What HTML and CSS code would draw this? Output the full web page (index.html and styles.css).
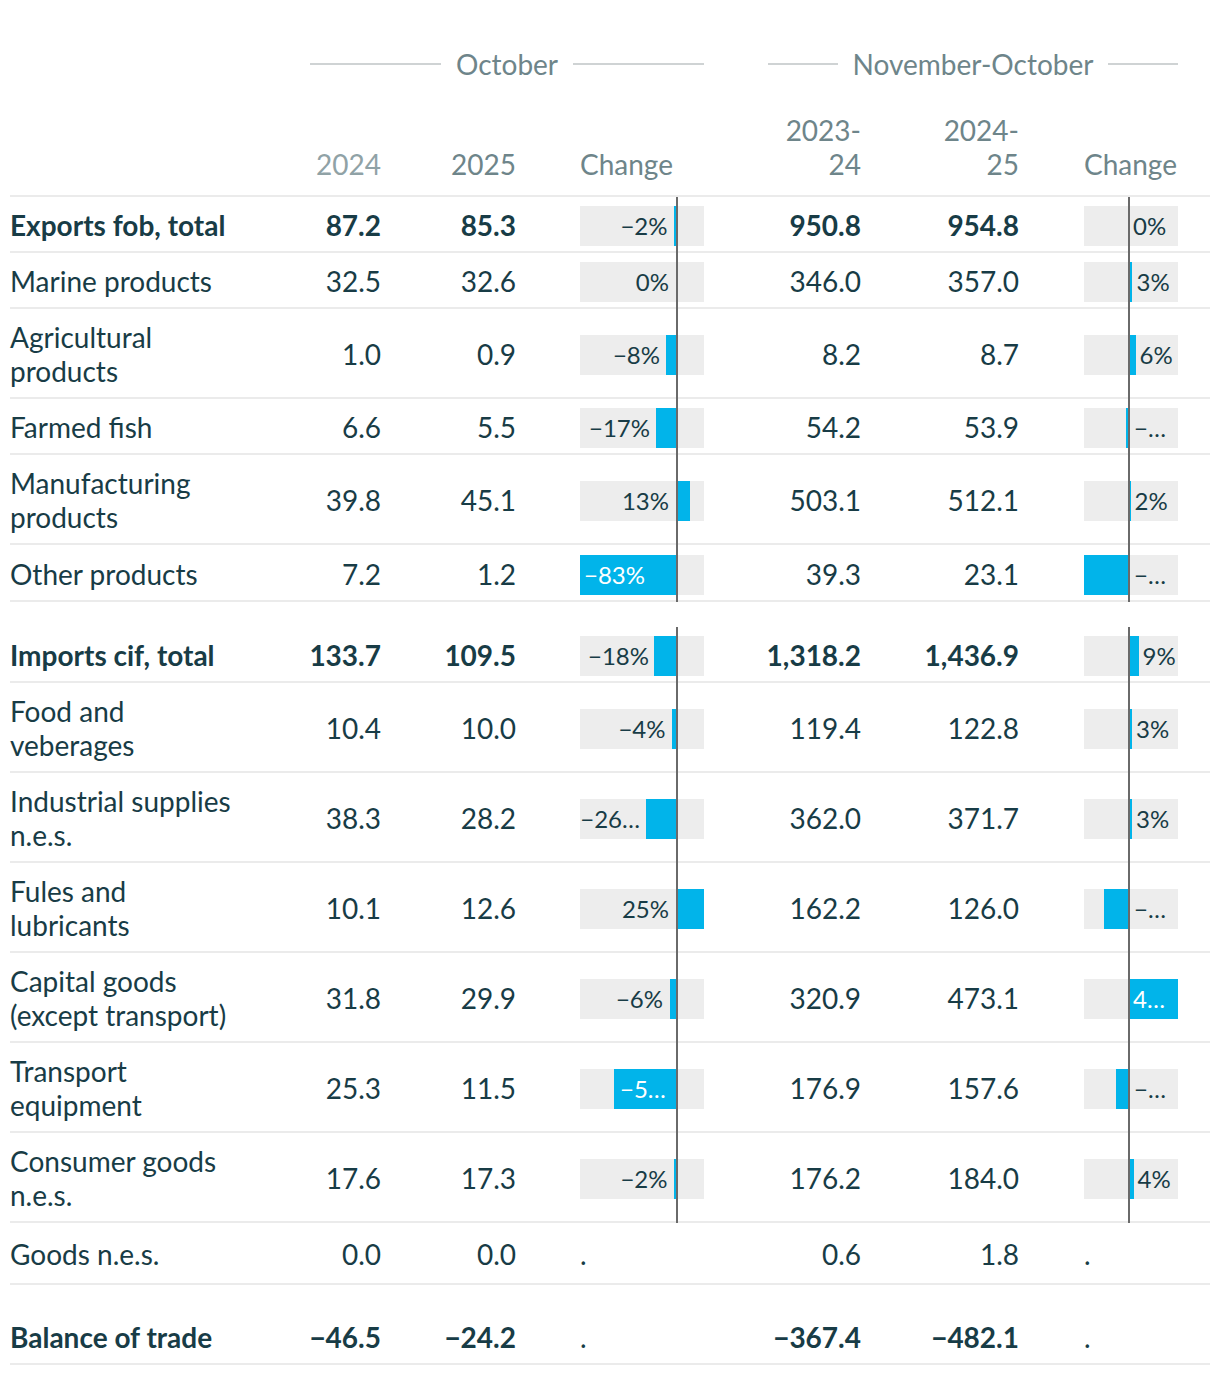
FILE: index.html
```html
<!DOCTYPE html>
<html lang="en">
<head>
<meta charset="utf-8">
<title>Trade table</title>
<link rel="stylesheet" href="styles.css">
</head>
<body>
<div class="table">
  <div class="grow group-row">
    <div class="group g-oct"><span class="rule"></span><span class="gtext">October</span><span class="rule"></span></div>
    <div class="group g-nov"><span class="rule"></span><span class="gtext">November-October</span><span class="rule"></span></div>
  </div>

  <div class="grow head-row">
    <div class="hc lab"></div>
    <div class="hc num light">2024</div>
    <div class="hc num">2025</div>
    <div class="hc chg">Change</div>
    <div class="hc num"><span class="wrap2">2023-<wbr>24</span></div>
    <div class="hc num"><span class="wrap2">2024-<wbr>25</span></div>
    <div class="hc chg2">Change</div>
    <div class="hc"></div>
  </div>

  <!-- Exports -->
  <div class="grow row bold">
    <div class="lab">Exports fob, total</div>
    <div class="num">87.2</div>
    <div class="num">85.3</div>
    <div class="bar b1"><div class="track"><i class="fill" style="left:94px;width:3px"></i><span class="bl" style="right:36.5px">−2%</span></div><i class="zero"></i></div>
    <div class="num">950.8</div>
    <div class="num">954.8</div>
    <div class="bar b2"><div class="track"><i class="fill" style="left:45px;width:0.5px"></i><span class="bl" style="left:49px">0%</span></div><i class="zero"></i></div>
    <div></div>
  </div>

  <div class="grow row">
    <div class="lab">Marine products</div>
    <div class="num">32.5</div>
    <div class="num">32.6</div>
    <div class="bar b1"><div class="track"><i class="fill" style="left:97px;width:0.4px"></i><span class="bl" style="right:35px">0%</span></div><i class="zero"></i></div>
    <div class="num">346.0</div>
    <div class="num">357.0</div>
    <div class="bar b2"><div class="track"><i class="fill" style="left:45px;width:3.4px"></i><span class="bl" style="left:52.5px">3%</span></div><i class="zero"></i></div>
    <div></div>
  </div>

  <div class="grow row">
    <div class="lab">Agricultural products</div>
    <div class="num">1.0</div>
    <div class="num">0.9</div>
    <div class="bar b1"><div class="track"><i class="fill" style="left:86px;width:11px"></i><span class="bl" style="right:44px">−8%</span></div><i class="zero"></i></div>
    <div class="num">8.2</div>
    <div class="num">8.7</div>
    <div class="bar b2"><div class="track"><i class="fill" style="left:45px;width:6.5px"></i><span class="bl" style="left:55.5px">6%</span></div><i class="zero"></i></div>
    <div></div>
  </div>

  <div class="grow row">
    <div class="lab">Farmed fish</div>
    <div class="num">6.6</div>
    <div class="num">5.5</div>
    <div class="bar b1"><div class="track"><i class="fill" style="left:76px;width:21px"></i><span class="bl" style="right:54px">−17%</span></div><i class="zero"></i></div>
    <div class="num">54.2</div>
    <div class="num">53.9</div>
    <div class="bar b2"><div class="track"><i class="fill" style="left:42px;width:3px"></i><span class="bl" style="left:50px">−…</span></div><i class="zero"></i></div>
    <div></div>
  </div>

  <div class="grow row">
    <div class="lab">Manufacturing products</div>
    <div class="num">39.8</div>
    <div class="num">45.1</div>
    <div class="bar b1"><div class="track"><i class="fill" style="left:97px;width:13px"></i><span class="bl" style="right:35px">13%</span></div><i class="zero"></i></div>
    <div class="num">503.1</div>
    <div class="num">512.1</div>
    <div class="bar b2"><div class="track"><i class="fill" style="left:45px;width:1.9px"></i><span class="bl" style="left:50.5px">2%</span></div><i class="zero"></i></div>
    <div></div>
  </div>

  <div class="grow row r-other">
    <div class="lab">Other products</div>
    <div class="num">7.2</div>
    <div class="num">1.2</div>
    <div class="bar b1"><div class="track"><i class="fill" style="left:0;width:97px"></i><span class="bl in" style="left:4px">−83%</span></div><i class="zero"></i></div>
    <div class="num">39.3</div>
    <div class="num">23.1</div>
    <div class="bar b2"><div class="track"><i class="fill" style="left:0;width:45px"></i><span class="bl" style="left:50px">−…</span></div><i class="zero"></i></div>
    <div></div>
  </div>

  <div class="spacer s1"></div>

  <!-- Imports -->
  <div class="grow row bold">
    <div class="lab">Imports cif, total</div>
    <div class="num">133.7</div>
    <div class="num">109.5</div>
    <div class="bar b1"><div class="track"><i class="fill" style="left:74px;width:23px"></i><span class="bl" style="right:55px">−18%</span></div><i class="zero"></i></div>
    <div class="num">1,318.2</div>
    <div class="num">1,436.9</div>
    <div class="bar b2"><div class="track"><i class="fill" style="left:45px;width:9.5px"></i><span class="bl" style="left:58.5px">9%</span></div><i class="zero"></i></div>
    <div></div>
  </div>

  <div class="grow row">
    <div class="lab">Food and veberages</div>
    <div class="num">10.4</div>
    <div class="num">10.0</div>
    <div class="bar b1"><div class="track"><i class="fill" style="left:92px;width:5px"></i><span class="bl" style="right:38.5px">−4%</span></div><i class="zero"></i></div>
    <div class="num">119.4</div>
    <div class="num">122.8</div>
    <div class="bar b2"><div class="track"><i class="fill" style="left:45px;width:3px"></i><span class="bl" style="left:52px">3%</span></div><i class="zero"></i></div>
    <div></div>
  </div>

  <div class="grow row">
    <div class="lab">Industrial supplies n.e.s.</div>
    <div class="num">38.3</div>
    <div class="num">28.2</div>
    <div class="bar b1"><div class="track"><i class="fill" style="left:66px;width:31px"></i><span class="bl" style="right:64px">−26…</span></div><i class="zero"></i></div>
    <div class="num">362.0</div>
    <div class="num">371.7</div>
    <div class="bar b2"><div class="track"><i class="fill" style="left:45px;width:2.8px"></i><span class="bl" style="left:52px">3%</span></div><i class="zero"></i></div>
    <div></div>
  </div>

  <div class="grow row">
    <div class="lab">Fules and lubricants</div>
    <div class="num">10.1</div>
    <div class="num">12.6</div>
    <div class="bar b1"><div class="track"><i class="fill" style="left:97px;width:27px"></i><span class="bl" style="right:35px">25%</span></div><i class="zero"></i></div>
    <div class="num">162.2</div>
    <div class="num">126.0</div>
    <div class="bar b2"><div class="track"><i class="fill" style="left:20px;width:25px"></i><span class="bl" style="left:50px">−…</span></div><i class="zero"></i></div>
    <div></div>
  </div>

  <div class="grow row">
    <div class="lab">Capital goods (except transport)</div>
    <div class="num">31.8</div>
    <div class="num">29.9</div>
    <div class="bar b1"><div class="track"><i class="fill" style="left:90px;width:7px"></i><span class="bl" style="right:41px">−6%</span></div><i class="zero"></i></div>
    <div class="num">320.9</div>
    <div class="num">473.1</div>
    <div class="bar b2"><div class="track"><i class="fill" style="left:45px;width:49px"></i><span class="bl in" style="left:49px">4…</span></div><i class="zero"></i></div>
    <div></div>
  </div>

  <div class="grow row">
    <div class="lab">Transport equipment</div>
    <div class="num">25.3</div>
    <div class="num">11.5</div>
    <div class="bar b1"><div class="track"><i class="fill" style="left:34px;width:63px"></i><span class="bl in" style="left:40px">−5…</span></div><i class="zero"></i></div>
    <div class="num">176.9</div>
    <div class="num">157.6</div>
    <div class="bar b2"><div class="track"><i class="fill" style="left:32px;width:13px"></i><span class="bl" style="left:50px">−…</span></div><i class="zero"></i></div>
    <div></div>
  </div>

  <div class="grow row">
    <div class="lab">Consumer goods n.e.s.</div>
    <div class="num">17.6</div>
    <div class="num">17.3</div>
    <div class="bar b1"><div class="track"><i class="fill" style="left:94px;width:3px"></i><span class="bl" style="right:36.5px">−2%</span></div><i class="zero"></i></div>
    <div class="num">176.2</div>
    <div class="num">184.0</div>
    <div class="bar b2"><div class="track"><i class="fill" style="left:45px;width:4.7px"></i><span class="bl" style="left:53.5px">4%</span></div><i class="zero"></i></div>
    <div></div>
  </div>

  <div class="grow row tall">
    <div class="lab">Goods n.e.s.</div>
    <div class="num">0.0</div>
    <div class="num">0.0</div>
    <div class="dot b1">.</div>
    <div class="num">0.6</div>
    <div class="num">1.8</div>
    <div class="dot b2">.</div>
    <div></div>
  </div>

  <div class="spacer s2"></div>

  <div class="grow row bold">
    <div class="lab">Balance of trade</div>
    <div class="num">−46.5</div>
    <div class="num">−24.2</div>
    <div class="dot b1">.</div>
    <div class="num">−367.4</div>
    <div class="num">−482.1</div>
    <div class="dot b2">.</div>
    <div></div>
  </div>
</div>
</body>
</html>
```

FILE: styles.css
```css
html, body {
  margin: 0;
  padding: 0;
  background: #ffffff;
}

body {
  font-family: Lato, "Noto Sans", "Liberation Sans", sans-serif;
  color: #183c46;
}

.table {
  padding: 47px 10px 0;
  width: 1200px;
}

.grow {
  display: grid;
  grid-template-columns: 300px 71px 135px 188px 157px 158px 159px 32px;
}

/* group headers */
.group {
  display: flex;
  align-items: center;
  gap: 15px;
  font-size: 28px;
  line-height: 34px;
  color: #6e858a;
}

.g-oct {
  grid-column: 2 / 5;
}

.g-nov {
  grid-column: 5 / 8;
  margin-left: 64px;
}

.rule {
  flex: 1;
  height: 2px;
  background: #cfd3d4;
}

.gtext {
  white-space: nowrap;
}

/* column headers */
.head-row {
  border-bottom: 2px solid #ebebeb;
  font-size: 28px;
  line-height: 34px;
  color: #6e858a;
}

.hc {
  display: flex;
  align-items: flex-end;
  padding: 32px 0 14px;
}

.hc.num {
  justify-content: flex-end;
  text-align: right;
}

.hc.light {
  color: #90a2a6;
}

.hc.chg {
  padding-left: 64px;
}

.hc.chg2 {
  padding-left: 65px;
}

.wrap2 {
  display: inline-block;
  max-width: 93px;
  text-align: right;
}

/* body rows */
.row {
  border-bottom: 2px solid #ebebeb;
  font-size: 28px;
  line-height: 34px;
}

.row > div {
  display: flex;
  align-items: center;
  padding-top: 11px;
  padding-bottom: 9px;
}

.row > .bar {
  padding-top: 9px;
  padding-bottom: 5px;
}

.row.tall > div {
  padding-top: 14px;
  padding-bottom: 12px;
}

.row.r-other > div {
  padding-top: 12px;
  padding-bottom: 9px;
}

.row.r-other > .bar {
  padding-top: 10px;
  padding-bottom: 5px;
}

.row .lab {
  padding-right: 64px;
}

.row .num {
  justify-content: flex-end;
}

.row.bold .lab,
.row.bold .num {
  font-weight: 700;
}

.row .b1 {
  padding-left: 64px;
}

.row .b2 {
  padding-left: 65px;
}

.bar {
  position: relative;
}

.track {
  position: relative;
  flex: none;
  height: 40px;
  background: #ededed;
  overflow: hidden;
}

.b1 .track {
  width: 124px;
}

.b2 .track {
  width: 94px;
}

.fill {
  position: absolute;
  top: 0;
  bottom: 0;
  background: #01b4ea;
}

.zero {
  position: absolute;
  top: 0;
  bottom: -2px;
  width: 2px;
  background: #6a6a6a;
  z-index: 2;
}

.b1 .zero {
  left: 160px;
}

.b2 .zero {
  left: 109px;
}

.bl {
  position: absolute;
  top: 0;
  line-height: 40px;
  font-size: 24px;
  white-space: nowrap;
  color: #183c46;
  z-index: 1;
}

.bl.in {
  color: #ffffff;
}

.dot {
  align-items: flex-end;
}

.spacer.s1 {
  height: 25px;
}

.spacer.s2 {
  height: 24px;
}
```
